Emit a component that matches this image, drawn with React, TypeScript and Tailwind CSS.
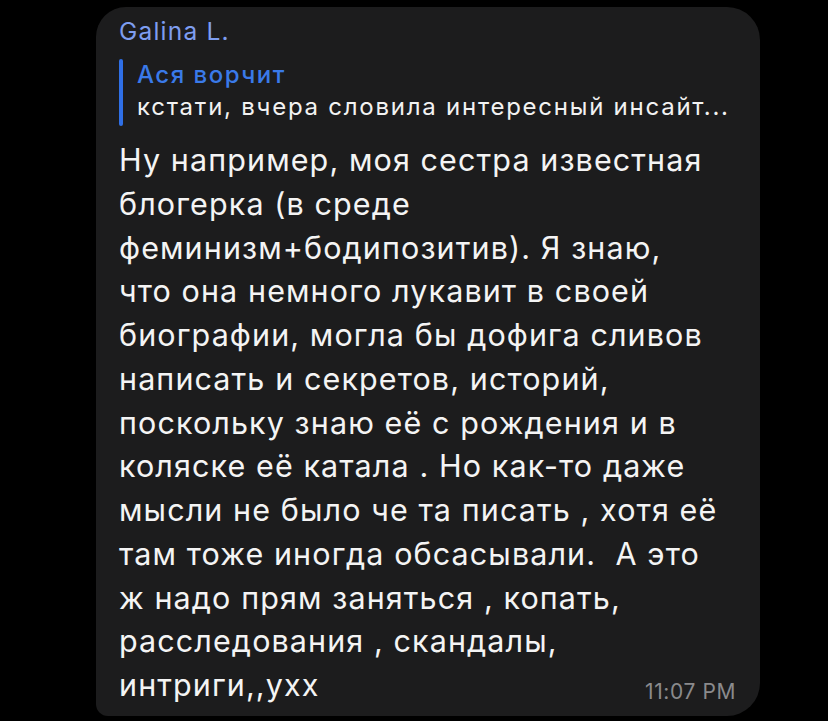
import React from "react";

const lines = [
  "Ну например, моя сестра известная",
  "блогерка (в среде",
  "феминизм+бодипозитив). Я знаю,",
  "что она немного лукавит в своей",
  "биографии, могла бы дофига сливов",
  "написать и секретов, историй,",
  "поскольку знаю её с рождения и в",
  "коляске её катала . Но как-то даже",
  "мысли не было че та писать , хотя её",
  "там тоже иногда обсасывали.  А это",
  "ж надо прям заняться , копать,",
  "расследования , скандалы,",
  "интриги,,ухх",
];

export default function App() {
  return (
    <div
      className="w-[828px] h-[721px] bg-black overflow-hidden pl-[96px] pt-[7px]"
      style={{ fontFamily: "Inter, 'Noto Sans', sans-serif" }}
    >
      <div className="relative w-[664px] h-[709px] bg-[#1c1c1d] rounded-tl-[30px] rounded-tr-[33px] rounded-br-[33px] rounded-bl-[12px] pl-[23px] pt-[8px]">
        <div className="text-[24.5px] leading-[32px] text-[#7e9df0] tracking-[1.2px]">Galina L.</div>
        <div className="flex mt-[12px]">
          <div className="w-[4px] h-[67px] rounded-full bg-[#2f6fe6]" />
          <div className="pl-[14px]">
            <div className="text-[24px] leading-[32px] font-medium text-[#3a7ae9] tracking-[1.5px]">Ася ворчит</div>
            <div className="text-[24px] leading-[32px] text-[#f2f2f2] whitespace-nowrap tracking-[1.75px]">кстати, вчера словила интересный инсайт...</div>
          </div>
        </div>
        <div className="mt-[12px] text-[30.5px] leading-[43.75px] text-[#f4f4f4] tracking-[1.1px]">
          {lines.map((l, i) => (
            <div key={i} className="whitespace-pre">{l}</div>
          ))}
        </div>
        <div className="absolute right-[24px] bottom-[10px] text-[21px] leading-[28px] text-[#8a8a8c] tracking-[0.6px]">11:07 PM</div>
      </div>
    </div>
  );
}
